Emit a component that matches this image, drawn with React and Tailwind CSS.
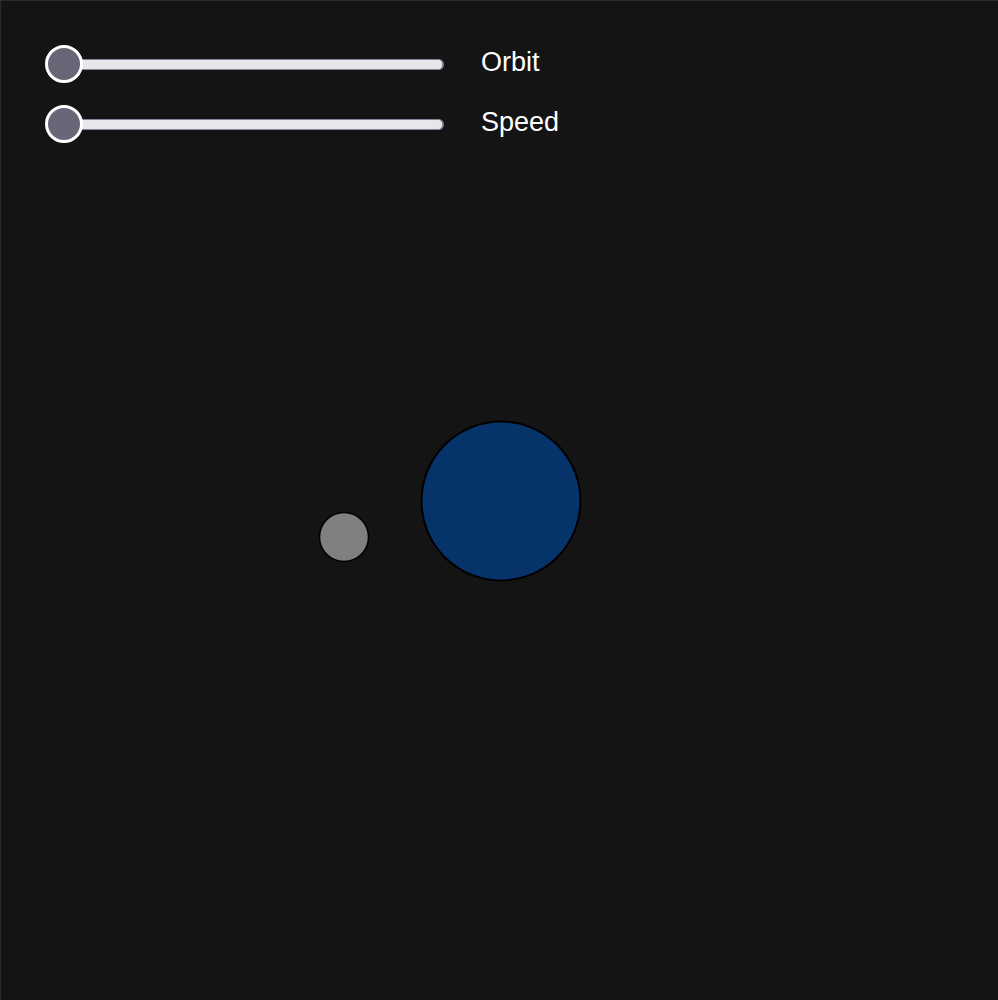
import React from "react";

function Slider({ label }) {
  return (
    <div className="flex items-center gap-[37px]">
      <div className="relative w-[399px] h-[38px]">
        <div className="absolute left-[19px] right-0 top-[14px] h-[11px] rounded-full bg-[#e7e7eb] border border-[#85839a] border-x-[2px]" />
        <div className="absolute left-0 top-0 w-[38px] h-[38px] rounded-full bg-[#676777] border-[3px] border-white" />
      </div>
      <span
        className="text-white text-[27px] leading-none -mt-[4px]"
        style={{ fontFamily: '"Liberation Sans", Arial, sans-serif' }}
      >
        {label}
      </span>
    </div>
  );
}

export default function App() {
  return (
    <div className="relative w-[998px] h-[1000px] bg-[#141414] border-l border-t border-[#2b2b2b] overflow-hidden">
      <svg className="absolute inset-0" width="998" height="1000" viewBox="0 0 998 1000">
        <circle cx="500" cy="500" r="79.5" fill="#06336a" stroke="#000" strokeWidth="2" />
        <circle cx="343" cy="536" r="24.5" fill="#808080" stroke="#000" strokeWidth="1.5" />
      </svg>
      <div className="relative flex flex-col gap-[22px] pl-[44px] pt-[44px]">
        <Slider label="Orbit" />
        <Slider label="Speed" />
      </div>
    </div>
  );
}
